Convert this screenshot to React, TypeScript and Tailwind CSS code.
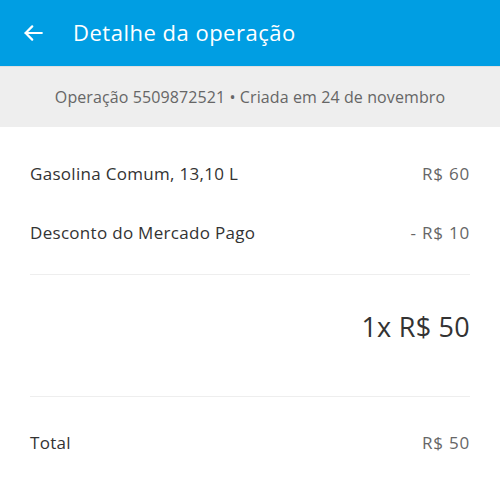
import React from "react";

export default function App() {
  const font = { fontFamily: "'Open Sans', 'Noto Sans', sans-serif" };
  return (
    <div className="w-[500px] h-[499px] bg-white overflow-hidden" style={font}>
      <div className="h-[66px] bg-[#009ee3] flex items-center">
        <div className="w-[73px] flex items-center pl-[24px]">
          <svg width="19" height="16" viewBox="0 0 19 16" fill="none" stroke="white" strokeWidth="2.2" strokeLinecap="round" strokeLinejoin="round">
            <path d="M17.8 8H1.6" />
            <path d="M8.2 1.4L1.6 8l6.6 6.6" />
          </svg>
        </div>
        <div className="text-white text-[22px] leading-none tracking-[0.5px] pb-[2px]">Detalhe da operação</div>
      </div>
      <div className="h-[61px] bg-[#eeeeee] border-t border-[#e0e0e0] flex items-center justify-center">
        <span className="text-[#666666] text-[16px] tracking-[0.1px]">Operação 5509872521 • Criada em 24 de novembro</span>
      </div>
      <div className="px-[30px] pt-[17px]">
        <div className="flex justify-between items-center h-[59px] text-[17px] tracking-[0.3px]">
          <span className="text-[#333333]">Gasolina Comum, 13,10 L</span>
          <span className="text-[#666666] tracking-[0.8px]">R$ 60</span>
        </div>
        <div className="flex justify-between items-center h-[59px] text-[17px] tracking-[0.3px]">
          <span className="text-[#333333]">Desconto do Mercado Pago</span>
          <span className="text-[#666666] tracking-[0.8px]">- R$ 10</span>
        </div>
        <div className="h-[13px] border-b border-[#eeeeee]" />
        <div className="h-[121px] flex justify-end pt-[37px]">
          <span className="text-[#333333] text-[27px] leading-[30px] tracking-[0.25px]">1x R$ 50</span>
        </div>
        <div className="border-t border-[#eeeeee]" />
        <div className="flex justify-between items-center h-[92px] text-[17px] tracking-[0.3px]">
          <span className="text-[#333333]">Total</span>
          <span className="text-[#666666] tracking-[0.8px]">R$ 50</span>
        </div>
      </div>
    </div>
  );
}
